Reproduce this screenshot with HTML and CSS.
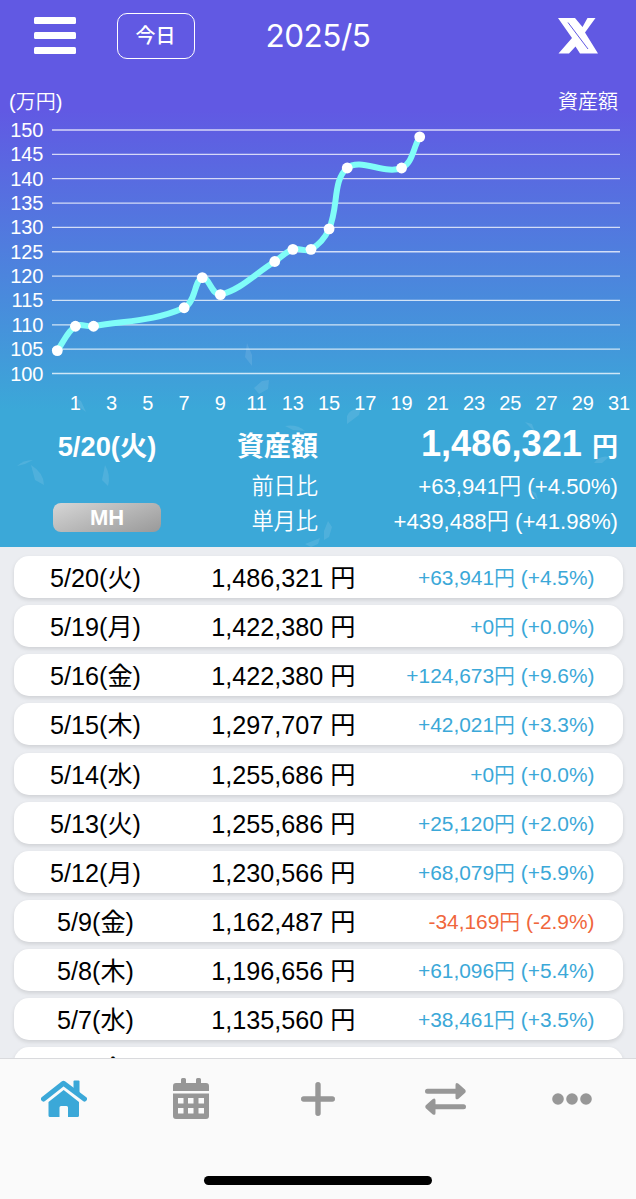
FILE: index.html
```
<!DOCTYPE html>
<html lang="ja">
<head>
<meta charset="utf-8">
<title>資産額 2025/5</title>
<link rel="stylesheet" href="styles.css">
</head>
<body>

<div class="app">

<div class="top">
  <!-- floating flakes behind the summary -->
  <svg class="flakes" width="636" height="547" viewBox="0 0 636 547">
    <path d="M247 343l5 12v11l-7 -9z"/>
    <path d="M254 388l8 -7 7 -1 -1 9 -9 5z"/>
    <path d="M77 399l4 2 5 11 -8 -6z"/>
    <path d="M17 466q6 -6 16 -6l-8 4z"/>
    <path d="M31 465q13 8 13 20l-9 -5z"/>
    <path d="M105 465q6 10 3 21l-6 -6z"/>
    <path d="M285 426q12 -2 20 5l-12 -1z"/>
    <path d="M347 416q2 -6 14 -9l-2 8 -12 9z"/>
    <path d="M525 422l7 2 3 8z"/>
    <path d="M594 463q6 -8 15 -6l-7 6z"/>
    <path d="M324 531l4 -10 4 6 -3 10 -5 3z"/>
    <path d="M305 544l15 -6 -2 6 -7 3z"/>
    <path d="M530 490l6 3 2 7z"/>
  </svg>

  <div class="nav">
    <svg class="menu" width="42" height="37" viewBox="0 0 42 37">
      <rect width="42" height="7" rx="1.5"/>
      <rect y="15" width="42" height="7" rx="1.5"/>
      <rect y="30" width="42" height="7" rx="1.5"/>
    </svg>
    <div class="today">今日</div>
    <div class="title">2025/5</div>
    <svg class="xlogo" width="40" height="36" viewBox="0 0 40 36">
      <path fill="#fff" d="M0 0h17l7.500 9L29.500 0h8L27 14.500 40 35.500H22L17.500 28.500 11 35.500H.5L14 20z"/>
      <path d="M10 4.500L30 31" stroke="#6159e3" stroke-width="1"/>
    </svg>
  </div>

  <div class="units"><span>(万円)</span><span>資産額</span></div>

  <svg class="chart" id="chart" width="636" height="300" viewBox="0 115 636 300"></svg>

  <div class="summary">
    <div class="left">
      <div class="day">5/20(火)</div>
      <div class="badge">MH</div>
    </div>
    <div class="names">
      <div class="big">資産額</div>
      <div class="small">前日比</div>
      <div class="small">単月比</div>
    </div>
    <div class="values">
      <div class="total">1,486,321 <span>円</span></div>
      <div class="small">+63,941円 (+4.50%)</div>
      <div class="small">+439,488円 (+41.98%)</div>
    </div>
  </div>
</div>

<div class="list">
  <div class="row"><span class="date">5/20(火)</span><span class="sum">1,486,321 円</span><span class="diff">+63,941円 (+4.5%)</span></div>
  <div class="row"><span class="date">5/19(月)</span><span class="sum">1,422,380 円</span><span class="diff">+0円 (+0.0%)</span></div>
  <div class="row"><span class="date">5/16(金)</span><span class="sum">1,422,380 円</span><span class="diff">+124,673円 (+9.6%)</span></div>
  <div class="row"><span class="date">5/15(木)</span><span class="sum">1,297,707 円</span><span class="diff">+42,021円 (+3.3%)</span></div>
  <div class="row"><span class="date">5/14(水)</span><span class="sum">1,255,686 円</span><span class="diff">+0円 (+0.0%)</span></div>
  <div class="row"><span class="date">5/13(火)</span><span class="sum">1,255,686 円</span><span class="diff">+25,120円 (+2.0%)</span></div>
  <div class="row"><span class="date">5/12(月)</span><span class="sum">1,230,566 円</span><span class="diff">+68,079円 (+5.9%)</span></div>
  <div class="row"><span class="date">5/9(金)</span><span class="sum">1,162,487 円</span><span class="diff minus">-34,169円 (-2.9%)</span></div>
  <div class="row"><span class="date">5/8(木)</span><span class="sum">1,196,656 円</span><span class="diff">+61,096円 (+5.4%)</span></div>
  <div class="row"><span class="date">5/7(水)</span><span class="sum">1,135,560 円</span><span class="diff">+38,461円 (+3.5%)</span></div>
  <div class="row"><span class="date">5/2(金)</span></div>
</div>

<div class="tabbar">
  <div class="tabs">
    <div class="tab on">
      <svg width="46" height="38" viewBox="0 0 46 38">
        <path d="M2.500 19L22.500 3.200 43.500 19" fill="none" stroke="currentColor" stroke-width="5" stroke-linecap="round" stroke-linejoin="round"/>
        <path d="M32.500 1.500q0 -1 1 -1h4q1 0 1 1v14l-6 -5z"/>
        <path d="M22.700 10L38 22v13.500q0 1.500 -1.500 1.500H27V27.500q0 -1.500 -1.500 -1.500h-5.500q-1.500 0 -1.500 1.500V37H9q-1.500 0 -1.500 -1.500V22z"/>
      </svg>
    </div>
    <div class="tab">
      <svg width="36" height="41" viewBox="0 0 36 41">
        <path d="M0 13V8q0 -3 3 -3h5V1.500Q8 0 9.500 0h2Q13 0 13 1.500V5h10V1.500Q23 0 24.500 0h2Q28 0 28 1.500V5h5q3 0 3 3v5z"/>
        <path fill-rule="evenodd" d="M0 15.500h36V38q0 3 -3 3H3q-3 0 -3 -3zM5 20v5.500h5.500V20zM15 20v5.500h5.500V20zM25.500 20v5.500H31V20zM5 30v5.500h5.500V30zM15 30v5.500h5.500V30zM25.500 30v5.500H31V30z"/>
      </svg>
    </div>
    <div class="tab">
      <svg width="34" height="34" viewBox="0 0 34 34">
        <path d="M17 2.700v28.600M2.700 17h28.600" stroke="currentColor" stroke-width="5.400" stroke-linecap="round"/>
      </svg>
    </div>
    <div class="tab">
      <svg width="41" height="32" viewBox="0 0 41 32">
        <path d="M2.500 8.300H33M8 23.700h30.500" stroke="currentColor" stroke-width="5" stroke-linecap="round"/>
        <path d="M30.500 2q0 -3 3 -1.300l6.700 6q1 1.500 0 3l-6.700 6q-3 1.800 -3 -1.300zM10.500 17.500q0 -3 -3 -1.300l-6.700 6q-1 1.500 0 3l6.700 6q3 1.800 3 -1.300z"/>
      </svg>
    </div>
    <div class="tab">
      <svg width="40" height="12" viewBox="0 0 40 12">
        <circle cx="6" cy="6" r="5.800"/><circle cx="20" cy="6" r="5.800"/><circle cx="34" cy="6" r="5.800"/>
      </svg>
    </div>
  </div>
  <div class="homebar"></div>
</div>

</div>

<script src="chart.js"></script>
</body>
</html>
```
FILE: styles.css
```
body {
  margin: 0;
  font-family: "Liberation Sans", "Noto Sans CJK JP", sans-serif;
}

.app {
  width: 636px;
  height: 1199px;
  display: flex;
  flex-direction: column;
  overflow: hidden;
  background: #ebedf1;
}

/* header with the chart */
.top {
  position: relative;
  height: 547px;
  flex: none;
  color: #fff;
  background: linear-gradient(#6159e3 110px, #3ba8d8 410px);
}

.flakes {
  position: absolute;
  top: 0;
  left: 0;
  fill: rgba(255,255,255,0.1);
}

.nav {
  display: grid;
  grid-template-columns: 83px 78px 1fr 78px;
  align-items: center;
  height: 71px;
  padding-left: 33.5px;
  box-sizing: border-box;
}

.menu {
  fill: #fff;
}

.today {
  height: 46px;
  box-sizing: border-box;
  border: 1.5px solid #fff;
  border-radius: 10px;
  font-size: 20px;
  font-weight: 500;
  line-height: 42px;
  text-align: center;
  font-family: "Noto Sans CJK JP", sans-serif;
}

.title {
  padding-left: 71px;
  font-family: Inter, sans-serif;
  font-size: 31.5px;
  letter-spacing: -0.5px;
  line-height: 40px;
}

.units {
  display: flex;
  justify-content: space-between;
  height: 44px;
  padding: 0 18px 0 9px;
  box-sizing: border-box;
  font-size: 20px;
  font-weight: 350;
  line-height: 62px;
}

.chart {
  display: block;
  position: relative;
}

.chart text {
  fill: #fff;
  font-size: 20px;
}

.grid {
  stroke: rgba(255,255,255,0.75);
  stroke-width: 1.3;
}

.line {
  fill: none;
  stroke: #80fdf8;
  stroke-width: 6;
}

.dot {
  fill: #fff;
}

.summary {
  position: relative;
  display: grid;
  grid-template-columns: 214px 104px 300px;
  padding-top: 8px;
}

.left {
  display: flex;
  flex-direction: column;
  align-items: center;
}

.day {
  font-size: 27.3px;
  font-weight: bold;
  line-height: 48px;
}

.badge {
  width: 108px;
  height: 29px;
  margin-top: 32px;
  border-radius: 8px;
  background: linear-gradient(160deg, #d6d6d6, #999);
  font-size: 22px;
  font-weight: bold;
  line-height: 29px;
  text-align: center;
}

.names, .values {
  text-align: right;
  white-space: nowrap;
}

.big {
  height: 46px;
  font-size: 27px;
  font-weight: bold;
  line-height: 48px;
}

.small {
  height: 35px;
  font-size: 22.2px;
  font-weight: 350;
  line-height: 35px;
}

.total {
  height: 46px;
  font-size: 36.2px;
  font-weight: bold;
  line-height: 41px;
}

.total span {
  font-size: 26px;
}

/* daily rows */
.list {
  flex: 1;
  min-height: 0;
  overflow: hidden;
  display: flex;
  flex-direction: column;
  gap: 7.15px;
  padding: 9px 13.5px 0;
}

.row {
  flex: none;
  display: grid;
  grid-template-columns: 164px 178px 239px;
  height: 42px;
  border-radius: 15px;
  background: #fff;
  box-shadow: 0 2px 4px rgba(0,0,0,0.12);
  color: #000;
  line-height: 44px;
}

.date {
  font-size: 25.2px;
  text-align: center;
}

.sum {
  font-size: 25.2px;
  text-align: right;
}

.diff {
  font-size: 20.9px;
  font-weight: 350;
  line-height: 43px;
  text-align: right;
  color: #3ba8d8;
}

.minus {
  color: #f0663c;
}

/* bottom bar */
.tabbar {
  flex: none;
  height: 141px;
  box-sizing: border-box;
  border-top: 1px solid #d9dadd;
  background: #fafafa;
}

.tabs {
  display: grid;
  grid-template-columns: repeat(5, 1fr);
  height: 79px;
}

.tab {
  display: flex;
  align-items: center;
  justify-content: center;
  color: #979797;
  fill: currentColor;
}

.on {
  color: #3ba8d8;
}

.homebar {
  width: 228px;
  height: 9px;
  margin: 38px auto 0;
  border-radius: 5px;
  background: #000;
}
```
FILE: chart.js
```
var NS = "http://www.w3.org/2000/svg";
var chart = document.getElementById("chart");

// [day, value in 10,000 yen]
var data = [[0,104.7],[1,109.7],[2,109.7],[7,113.5],[8,119.7],[9,116.2],[12,123.0],
            [13,125.5],[14,125.5],[15,129.7],[16,142.2],[19,142.2],[20,148.6]];

function px(day) { return 57.3 + day * 18.12; }
function py(v) { return 373.5 - (v - 100) * 4.87; }

function add(name, attrs, txt)
{
  var el = document.createElementNS(NS, name);
  for (var k in attrs) el.setAttribute(k, attrs[k]);
  if (txt !== undefined) el.textContent = txt;
  chart.appendChild(el);
}

for (var v = 150; v >= 100; v -= 5)
{
  add("line", {"class": "grid", x1: 52, x2: 620, y1: py(v), y2: py(v)});
  add("text", {x: 43.5, y: py(v) + 7, "text-anchor": "end"}, v);
}
for (var d = 1; d <= 31; d += 2)
{
  add("text", {x: px(d), y: 410, "text-anchor": "middle"}, d);
}

// smooth line through the points
var tension = 0.38;
var pts = data.map(function (p) { return {x: px(p[0]), y: py(p[1])}; });
var ctl = pts.map(function (p, i)
{
  var a = pts[i - 1] || p, b = pts[i + 1] || p;
  var d1 = Math.hypot(p.x - a.x, p.y - a.y), d2 = Math.hypot(b.x - p.x, b.y - p.y);
  var f1 = tension * d1 / (d1 + d2), f2 = tension * d2 / (d1 + d2);
  return {
    inx: p.x - f1 * (b.x - a.x), iny: p.y - f1 * (b.y - a.y),
    outx: p.x + f2 * (b.x - a.x), outy: p.y + f2 * (b.y - a.y)
  };
});
var path = "M" + pts[0].x + " " + pts[0].y;
for (var i = 1; i < pts.length; i++)
{
  path += "C" + [ctl[i-1].outx, ctl[i-1].outy, ctl[i].inx, ctl[i].iny, pts[i].x, pts[i].y].join(" ");
}
add("path", {"class": "line", d: path});
pts.forEach(function (p) { add("circle", {"class": "dot", cx: p.x, cy: p.y, r: 5.4}); });
```
